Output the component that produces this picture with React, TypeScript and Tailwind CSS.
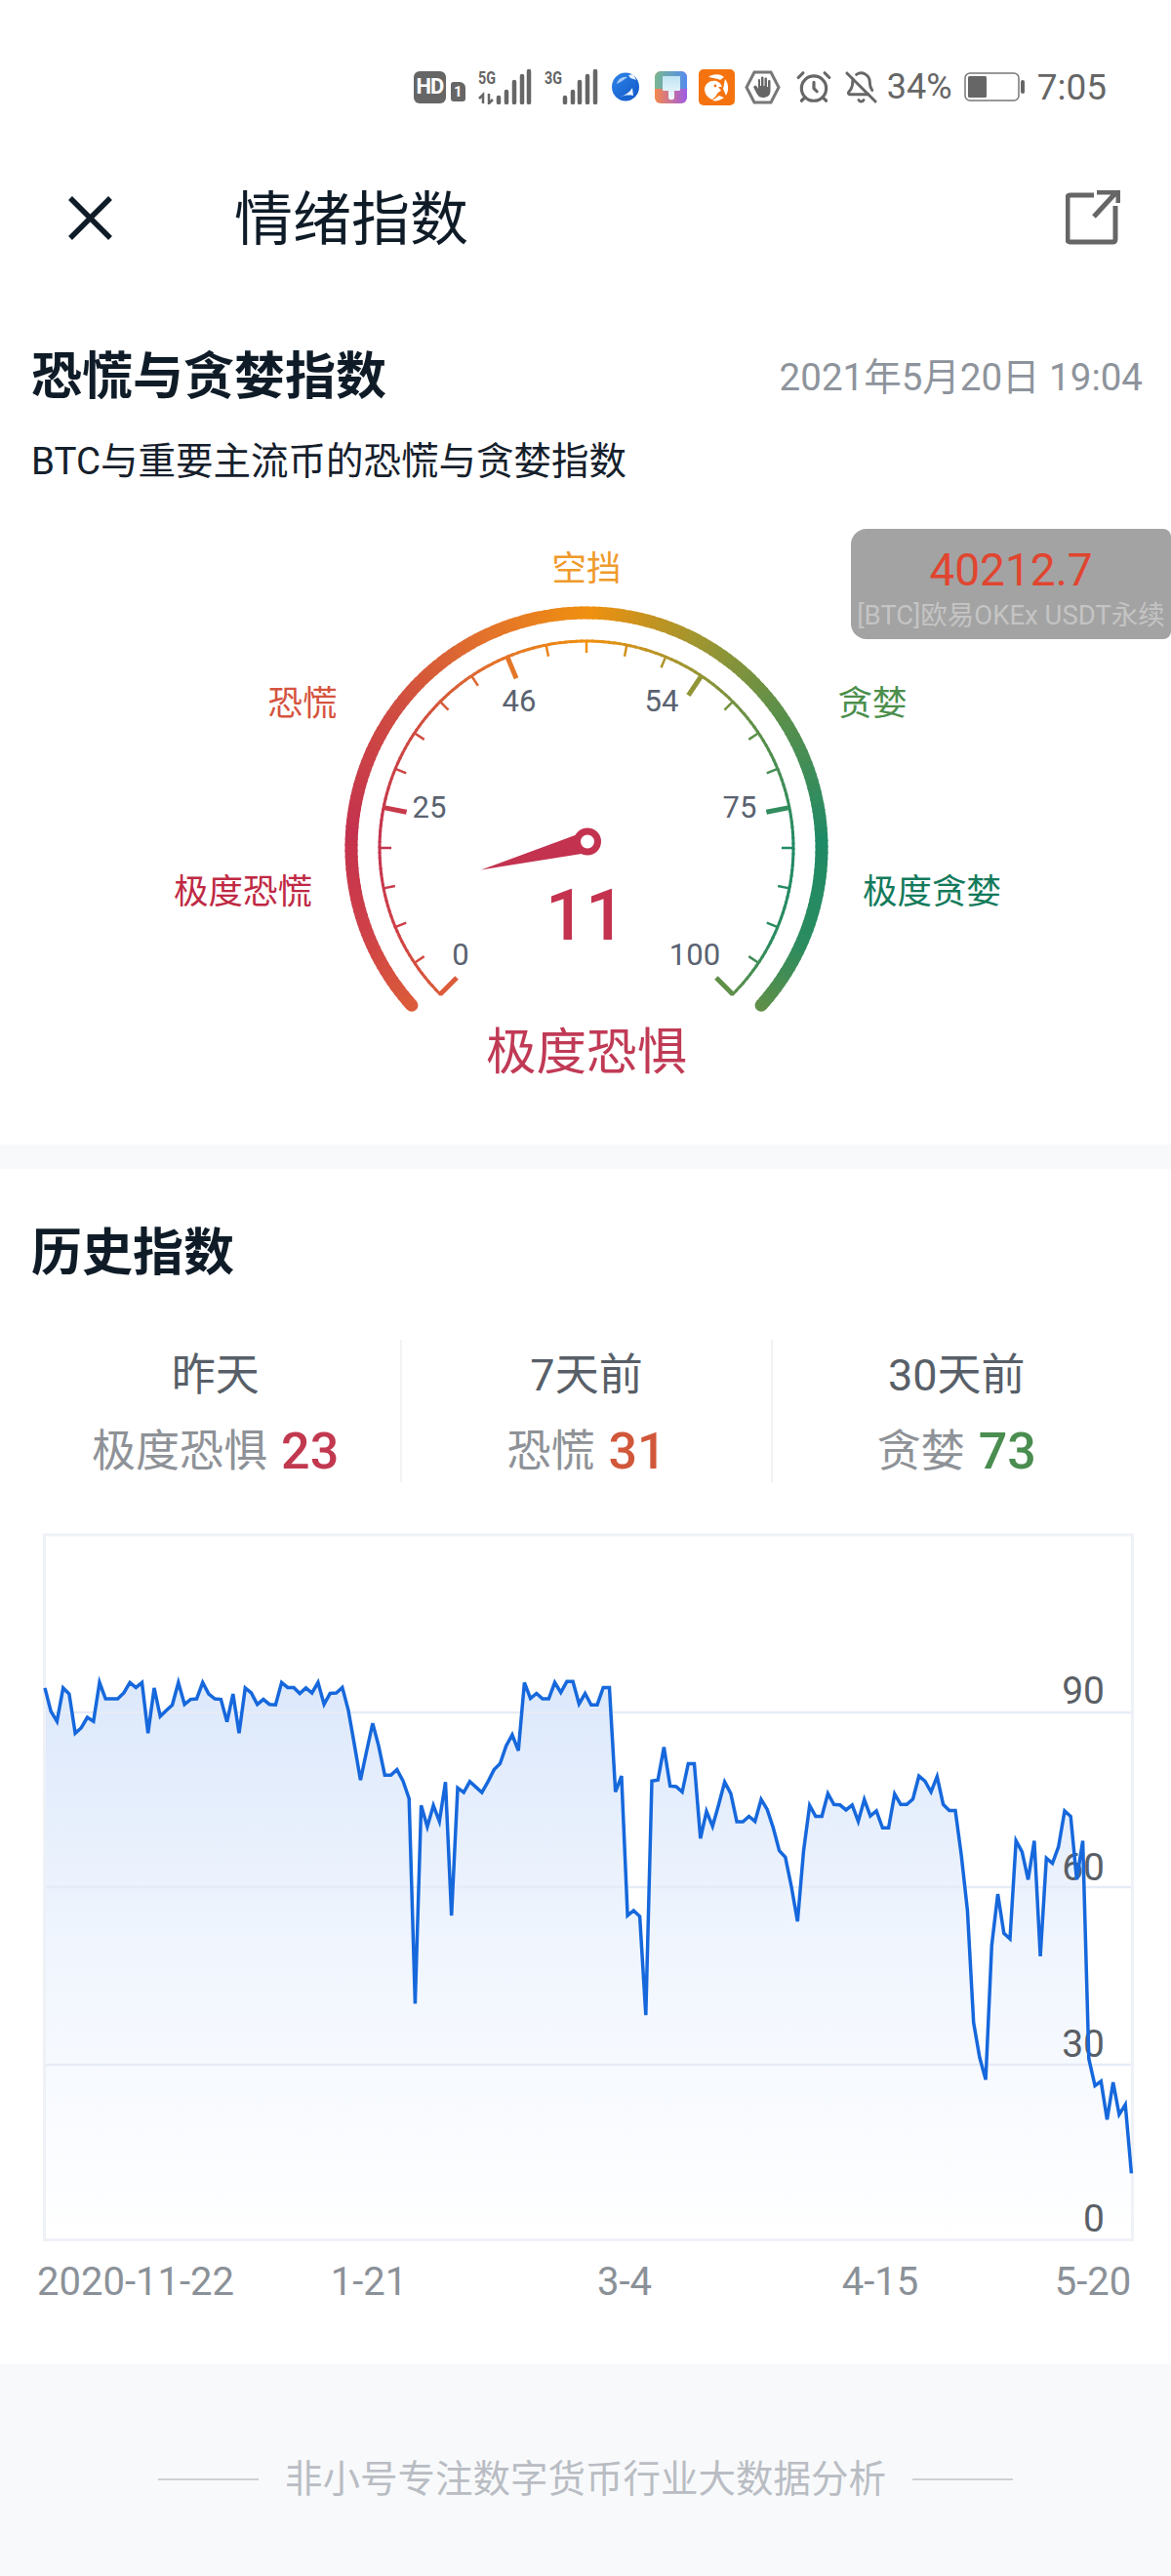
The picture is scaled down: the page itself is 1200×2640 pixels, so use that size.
import { AlarmClock, BellOff } from "lucide-react";

const CX = 601;
const CY = 869;

// colour along the gauge, t goes from the lower left end to the lower right end
const ramp: [number, number[]][] = [
  [0, [219, 91, 58]],
  [0.08, [206, 64, 72]],
  [0.17, [196, 50, 78]],
  [0.3, [208, 78, 64]],
  [0.4, [226, 114, 44]],
  [0.5, [240, 144, 15]],
  [0.6, [162, 150, 47]],
  [0.7, [95, 144, 73]],
  [0.83, [31, 138, 102]],
  [0.93, [43, 140, 95]],
  [1, [95, 143, 72]],
];

function colorAt(t: number) {
  let i = 0;
  while (i < ramp.length - 2 && t > ramp[i + 1][0]) i++;
  const [t0, c0] = ramp[i];
  const [t1, c1] = ramp[i + 1];
  const k = Math.min(1, Math.max(0, (t - t0) / (t1 - t0)));
  const c = c0.map((v, n) => Math.round(v + (c1[n] - v) * k));
  return `rgb(${c[0]},${c[1]},${c[2]})`;
}

function polar(deg: number, r: number) {
  const a = (deg * Math.PI) / 180;
  return [CX + r * Math.cos(a), CY - r * Math.sin(a)];
}

function GradientArc({ r, width, from, to }: { r: number; width: number; from: number; to: number }) {
  const n = 180;
  const segs = Array.from({ length: n }, (_, i) => {
    const a0 = from + ((to - from) * i) / n;
    const a1 = from + ((to - from) * (i + 1.3)) / n;
    const [x0, y0] = polar(a0, r);
    const [x1, y1] = polar(Math.max(a1, to), r);
    return (
      <path
        key={i}
        d={`M${x0} ${y0}A${r} ${r} 0 0 1 ${x1} ${y1}`}
        fill="none"
        stroke={colorAt(i / n)}
        strokeWidth={width}
      />
    );
  });
  const [sx, sy] = polar(from, r);
  const [ex, ey] = polar(to, r);
  return (
    <g>
      <circle cx={sx} cy={sy} r={width / 2} fill={colorAt(0)} />
      <circle cx={ex} cy={ey} r={width / 2} fill={colorAt(1)} />
      {segs}
    </g>
  );
}

const majorTicks = [0, 5, 10, 15, 19, 24];

const tickLabels = [
  { text: "0", x: 472, y: 978 },
  { text: "25", x: 440, y: 827 },
  { text: "46", x: 532, y: 718 },
  { text: "54", x: 678, y: 718 },
  { text: "75", x: 758, y: 827 },
  { text: "100", x: 712, y: 978 },
];

const zoneLabels = [
  { text: "空挡", x: 601, y: 583, color: "#EF9A2B" },
  { text: "恐慌", x: 310, y: 721, color: "#D6533F" },
  { text: "贪婪", x: 894, y: 721, color: "#4B8E4C" },
  { text: "极度恐慌", x: 249, y: 914, color: "#BF2944" },
  { text: "极度贪婪", x: 955, y: 914, color: "#137A5B" },
];

function Gauge() {
  return (
    <svg viewBox="0 520 1200 653" className="block w-[1200px] h-[653px]">
      <GradientArc r={241} width={13} from={222} to={-42} />
      <GradientArc r={212} width={3} from={225} to={-45} />
      {Array.from({ length: 25 }, (_, i) => {
        const major = majorTicks.includes(i);
        const deg = 225 - i * 11.25;
        const [x0, y0] = polar(deg, 212);
        const [x1, y1] = polar(deg, major ? 188 : 200);
        return (
          <line
            key={i}
            x1={x0}
            y1={y0}
            x2={x1}
            y2={y1}
            stroke={colorAt(i / 24)}
            strokeWidth={major ? 5 : 2.5}
          />
        );
      })}
      {tickLabels.map((l) => (
        <text key={l.text} x={l.x} y={l.y} textAnchor="middle" dominantBaseline="central" fontSize={31} fill="#5A6270">
          {l.text}
        </text>
      ))}
      {zoneLabels.map((l) => (
        <text key={l.text} x={l.x} y={l.y} textAnchor="middle" dominantBaseline="central" fontSize={35.5} fill={l.color}>
          {l.text}
        </text>
      ))}
      <polygon points="492.7,891.5 592,855 596,875" fill="#C3324F" />
      <circle cx={602} cy={862.5} r={10.5} fill="#fff" stroke="#C3324F" strokeWidth={7} />
      <text x={600} y={938} textAnchor="middle" dominantBaseline="central" fontSize={72} fontWeight={500} fill="#C3324F">
        11
      </text>
      <text x={601} y={1078} textAnchor="middle" dominantBaseline="central" fontSize={51.5} fill="#C03A55">
        极度恐惧
      </text>
    </svg>
  );
}

// line trace, y read off the chart (page y = 1560 + v / 1.96), one point per day
const trace = [
  333, 380, 400, 333, 345, 424, 413, 392, 400, 322, 355, 355, 355, 343, 322, 332, 322, 424, 333, 390, 378, 367, 322, 366,
  356, 355, 322, 345, 355, 356, 401, 345, 424, 333, 343, 366, 356, 366, 367, 322, 332, 332, 344, 333, 343, 322, 366, 344,
  343, 332, 378, 447, 518, 460, 404, 450, 508, 508, 497, 520, 555, 967, 569, 612, 569, 601, 522, 790, 534, 543, 521, 532,
  543, 521, 497, 485, 449, 427, 459, 322, 354, 344, 355, 355, 322, 342, 320, 320, 365, 344, 367, 367, 332, 332, 542, 510,
  790, 780, 792, 990, 520, 518, 452, 530, 531, 542, 485, 485, 635, 581, 611, 568, 522, 545, 602, 602, 591, 601, 557, 577,
  614, 660, 673, 733, 802, 660, 569, 591, 591, 545, 567, 568, 578, 568, 601, 557, 590, 580, 614, 614, 546, 567, 567, 556,
  510, 520, 542, 511, 567, 579, 579, 670, 780, 1005, 1075, 1120, 850, 747, 826, 837, 640, 662, 718, 640, 872, 675, 685,
  652, 580, 591, 718, 640, 1078, 1132, 1123, 1200, 1125, 1190, 1170, 1308,
];

const linePoints = trace.map((v, i) => `${(46 + i * 6.22).toFixed(1)},${(1560 + v / 1.96).toFixed(1)}`).join(" ");

const gridLines = [1755, 1934, 2116];

const yLabels = [
  { text: "90", y: 1733 },
  { text: "60", y: 1914 },
  { text: "30", y: 2095 },
  { text: "0", y: 2274 },
];

const xLabels = [
  { text: "2020-11-22", x: 139 },
  { text: "1-21", x: 378 },
  { text: "3-4", x: 640 },
  { text: "4-15", x: 902 },
  { text: "5-20", x: 1120 },
];

function HistoryChart() {
  return (
    <svg viewBox="0 1570 1200 853" className="block w-[1200px] h-[853px]">
      <defs>
        <linearGradient id="area" x1="0" y1="1720" x2="0" y2="2296" gradientUnits="userSpaceOnUse">
          <stop offset="0" stopColor="#DCE8FB" />
          <stop offset="0.5" stopColor="#F1F6FE" />
          <stop offset="1" stopColor="#FFFFFF" />
        </linearGradient>
      </defs>
      <polygon points={`46,2295 ${linePoints} 1159.6,2295`} fill="url(#area)" />
      {gridLines.map((y) => (
        <line key={y} x1={46} x2={1160} y1={y} y2={y} stroke="#E6ECF6" strokeWidth={2.5} />
      ))}
      <rect x={45.5} y={1573} width={1115} height={722.5} fill="none" stroke="#EEF1F6" strokeWidth={3} />
      {yLabels.map((l) => (
        <text key={l.text} x={1132} y={l.y} textAnchor="end" dominantBaseline="central" fontSize={39} fill="#5A5F66">
          {l.text}
        </text>
      ))}
      <polyline points={linePoints} fill="none" stroke="#1668DC" strokeWidth={3.5} strokeLinejoin="miter" />
      {xLabels.map((l) => (
        <text key={l.text} x={l.x} y={2338} textAnchor="middle" dominantBaseline="central" fontSize={40} fill="#8B9198">
          {l.text}
        </text>
      ))}
    </svg>
  );
}

function Signal({ label, arrows }: { label: string; arrows?: boolean }) {
  const bars = arrows
    ? [
        [21, 29],
        [29, 23],
        [37, 13],
        [45, 7],
        [52, 2],
      ]
    : [
        [21, 29],
        [29, 23],
        [36, 13],
        [44, 7],
        [52, 2],
      ];
  return (
    <svg viewBox="0 -6 55 42" className="-mt-[6px] block w-[55px] h-[42px]">
      <text x={0} y={15} fontSize={18} fontWeight={700} fill="#666" textLength={18} lengthAdjust="spacingAndGlyphs">
        {label}
      </text>
      {arrows && (
        <path d="M1 30L5 26V35M5 26H6M11 25V35L15 31" stroke="#666" strokeWidth={2.5} fill="none" />
      )}
      {bars.map(([x, top]) => (
        <line key={x} x1={x} x2={x} y1={top} y2={34} stroke="#666" strokeWidth={4.5} strokeLinecap="round" />
      ))}
    </svg>
  );
}

function StatusBar() {
  return (
    <div className="flex h-[178px] items-center justify-end pr-[66px] text-[#666]">
      <div className="flex h-[33px] w-[33px] items-center justify-center rounded-[6px] bg-[#666] text-[22px] font-bold leading-none tracking-[-1px] text-white">
        HD
      </div>
      <div className="ml-[5px] mt-[10px] flex h-[20px] w-[15px] items-center justify-center rounded-[3px] rounded-tr-[6px] bg-[#666] text-[15px] font-bold leading-none text-white">
        1
      </div>
      <div className="ml-[13px]">
        <Signal label="5G" arrows />
      </div>
      <div className="ml-[13px] w-[53px]">
        <Signal label="3G" />
      </div>
      <svg viewBox="0 0 28 30" className="ml-[16px] block h-[30px] w-[28px]">
        <defs>
          <linearGradient id="globe" x1="0" y1="0" x2="1" y2="1">
            <stop offset="0" stopColor="#2F86E8" />
            <stop offset="1" stopColor="#0F55C8" />
          </linearGradient>
        </defs>
        <ellipse cx={14} cy={15} rx={14} ry={14.5} fill="url(#globe)" />
        <path d="M5 12C6 7 11 4 16 5C12 8 9 10 5 12Z" fill="#A9CDF5" />
        <path d="M17 3L22 2L25 8L19 6Z" fill="#EAF3FD" />
        <path d="M8 25C13 24 18 21 21 16L22 24C17 23 12 24 8 25Z" fill="#EAF3FD" />
      </svg>
      <svg viewBox="0 0 33 33" className="ml-[16px] block h-[33px] w-[33px]">
        <defs>
          <linearGradient id="brushA" x1="0" y1="0" x2="1" y2="0">
            <stop offset="0" stopColor="#4FC5A8" />
            <stop offset="1" stopColor="#3E9CF0" />
          </linearGradient>
          <linearGradient id="brushB" x1="0" y1="0" x2="1" y2="0">
            <stop offset="0" stopColor="#F5894A" />
            <stop offset="1" stopColor="#9C5CE6" />
          </linearGradient>
          <linearGradient id="brushC" x1="0" y1="0" x2="0" y2="1">
            <stop offset="0" stopColor="#BFE3F2" />
            <stop offset="1" stopColor="#F6FBFE" />
          </linearGradient>
        </defs>
        <rect width={33} height={33} rx={6} fill="url(#brushB)" />
        <path d="M0 6C0 3 3 0 6 0H27C30 0 33 3 33 6V18H0Z" fill="url(#brushA)" opacity={0.75} />
        <path d="M8 5H26V19C26 20 25 20 24 20H20V27C20 30 14 30 14 27V20H10C9 20 8 20 8 19Z" fill="url(#brushC)" />
      </svg>
      <svg viewBox="0 0 37 37" className="ml-[12px] block h-[37px] w-[37px]">
        <rect width={37} height={37} rx={5} fill="#F4730F" />
        <path d="M10 8C14 5 21 4 26 8L22 11C18 9 14 9 10 8Z" fill="#fff" />
        <path d="M27 10C31 15 31 22 28 27L25 20C26 17 26 14 27 10Z" fill="#fff" />
        <path d="M26 29C22 32 18 33 14 32L21 27C23 28 24 28 26 29Z" fill="#fff" />
        <path d="M6 20C7 14 12 11 18 12C21 13 23 15 24 18L20 18L23 22C21 23 19 24 18 27L14 31C9 29 6 25 6 20Z" fill="#fff" />
        <circle cx={17} cy={17} r={1.4} fill="#F4730F" />
      </svg>
      <svg viewBox="0 0 37 35" className="ml-[10px] block h-[35px] w-[37px]">
        <path d="M10 2H27L35 17.5L27 33H10L2 17.5Z" fill="none" stroke="#777" strokeWidth={3} />
        <path
          d="M9 17L11 15.5C12 15.5 13 17 14 19V10C14 8.5 16 8.5 16 10V16H17V7.5C17 6 19.5 6 19.5 7.5V16H20.5V8.5C20.5 7 23 7 23 8.5V17H24V11C24 9.5 26.5 9.5 26.5 11V21C26.5 26 23 28 19 28C14 28 13 25 9 17Z"
          fill="#666"
        />
      </svg>
      <AlarmClock className="ml-[15px] h-[38px] w-[38px]" strokeWidth={2} color="#666" />
      <BellOff className="ml-[12px] h-[35px] w-[35px]" strokeWidth={2} color="#666" />
      <span className="ml-[9px] text-[36px] leading-none">34%</span>
      <svg viewBox="0 0 62 30" className="ml-[12px] block h-[30px] w-[62px]">
        <rect x={1} y={1} width={55} height={28} rx={5} fill="none" stroke="#777" strokeWidth={1.5} />
        <rect x={4} y={4} width={19} height={22} rx={1.5} fill="#666" />
        <rect x={58} y={8} width={4} height={14} rx={2} fill="#666" />
      </svg>
      <span className="ml-[13px] text-[37px] leading-none">7:05</span>
    </div>
  );
}

const history = [
  { when: "昨天", label: "极度恐惧", value: "23", color: "text-[#C1384F]" },
  { when: "7天前", label: "恐慌", value: "31", color: "text-[#D1573A]" },
  { when: "30天前", label: "贪婪", value: "73", color: "text-[#4A8D50]" },
];

export default function App() {
  return (
    <div className="h-[2640px] w-[1200px] overflow-hidden bg-white font-['Roboto','Noto_Sans_CJK_SC',sans-serif]">
      <StatusBar />

      <div className="flex h-[90px] items-center pl-[70px] pr-[52px]">
        <svg viewBox="0 0 45 45" className="block h-[45px] w-[45px]">
          <path d="M2 2L43 43M43 2L2 43" stroke="#0F1C28" strokeWidth={5.5} />
        </svg>
        <h1 className="ml-[125px] mt-[5px] text-[60px] font-normal leading-none text-[#0F1C28]">情绪指数</h1>
        <svg viewBox="0 0 56 56" className="ml-auto block h-[56px] w-[56px]">
          <path
            d="M29 5H5C3 5 2 6 2 8V50C2 52 3 53 5 53H48C50 53 51 52 51 50V16M29 27L52 2M32 2H54V13"
            fill="none"
            stroke="#666"
            strokeWidth={5}
          />
        </svg>
      </div>

      <div className="mt-[86px] flex h-[60px] items-center justify-between pl-[32px] pr-[29px] pt-[6px]">
        <h2 className="text-[52px] font-bold leading-none text-[#0F1C28]">恐慌与贪婪指数</h2>
        <span className="text-[38.5px] leading-none text-[#8E949C]">2021年5月20日 19:04</span>
      </div>
      <p className="mt-[34px] h-[50px] pl-[32px] text-[38.5px] leading-[50px] text-[#15202B]">BTC与重要主流币的恐慌与贪婪指数</p>

      <div className="relative mt-[22px]">
        <Gauge />
        <div className="absolute right-0 top-[22px] flex h-[113px] w-[328px] flex-col items-center rounded-l-[16px] rounded-r-[8px] bg-[#A3A3A3] pt-[17px]">
          <span className="text-[46px] leading-[50px] text-[#E0452F]">40212.7</span>
          <span className="mt-[6px] whitespace-nowrap text-[27.5px] leading-[32px] text-[#C4C4C4]">[BTC]欧易OKEx USDT永续</span>
        </div>
      </div>

      <div className="h-[25px] bg-[#F8F9FB]" />

      <h2 className="mt-[57px] h-[60px] pl-[32px] text-[52px] font-bold leading-[60px] text-[#0F1C28]">历史指数</h2>

      <div className="mx-[31px] mt-[58px] grid h-[146px] grid-cols-3">
        {history.map((h, i) => (
          <div key={h.when} className={`flex flex-col items-center ${i > 0 ? "border-l-2 border-[#F2F2F2]" : ""}`}>
            <span className="mt-[12px] text-[45px] leading-[50px] text-[#585F68]">{h.when}</span>
            <span className="mt-[28px] flex items-center text-[45px] leading-[50px] text-[#8E9297]">
              {h.label}
              <span className={`ml-[14px] text-[52px] font-medium ${h.color}`}>{h.value}</span>
            </span>
          </div>
        ))}
      </div>

      <div className="mt-[51px]">
        <HistoryChart />
      </div>

      <div className="flex h-[217px] items-center justify-center bg-[#F8F9FB] pt-[19px] text-[#B9BDC3]">
        <div className="h-[2px] w-[103px] bg-[#CDD0D5]" />
        <span className="mx-[27px] text-[38.5px] leading-none">非小号专注数字货币行业大数据分析</span>
        <div className="h-[2px] w-[103px] bg-[#CDD0D5]" />
      </div>
    </div>
  );
}
